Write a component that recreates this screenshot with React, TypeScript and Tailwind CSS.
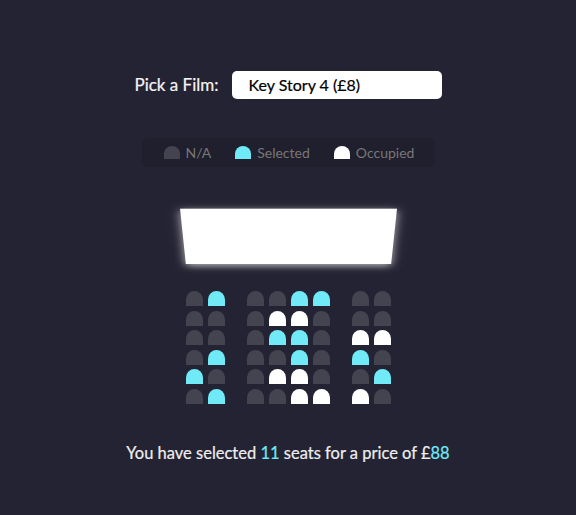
import { useState } from "react";

type SeatState = "n" | "s" | "o";

const seatRows: SeatState[][] = [
  ["n", "s", "n", "n", "s", "s", "n", "n"],
  ["n", "n", "n", "o", "o", "n", "n", "n"],
  ["n", "n", "n", "s", "s", "n", "o", "o"],
  ["n", "s", "n", "n", "s", "n", "s", "n"],
  ["s", "n", "n", "o", "o", "n", "n", "s"],
  ["n", "s", "n", "n", "o", "o", "o", "n"],
];

const seatColor: Record<SeatState, string> = {
  n: "bg-[#444451]",
  s: "bg-[#6feaf6]",
  o: "bg-white",
};

function Seat({ state, aisle }: { state: SeatState; aisle?: "left" | "right" }) {
  return (
    <div
      className={`h-[15px] w-[17px] rounded-t-[10px] ${seatColor[state]} ${
        aisle === "right" ? "mr-[17px]" : ""
      } ${aisle === "left" ? "ml-[17px]" : ""}`}
    />
  );
}

export default function App() {
  const [film] = useState("Key Story 4 (£8)");
  const selected = seatRows.flat().filter((s) => s === "s").length;

  return (
    <div className="flex min-h-screen h-[515px] w-full flex-col items-center bg-[#242333] font-['Lato',sans-serif] text-white">
      {/* film picker */}
      <div className="mt-[71px] flex items-center gap-[13px]">
        <label className="text-[17px] text-[#f4f4f4] [-webkit-text-stroke:0.2px_#f4f4f4]">Pick a Film:</label>
        <select
          value={film}
          onChange={() => {}}
          className="h-[28px] w-[210px] appearance-none rounded-[5px] border-0 bg-white pl-[17px] text-[16px] font-['Lato',sans-serif] text-black outline-none [-webkit-text-stroke:0.2px_#000]"
        >
          <option>Key Story 4 (£8)</option>
        </select>
      </div>

      {/* legend */}
      <ul className="mt-[39px] flex h-[29px] w-[293px] items-center gap-[24px] rounded-[5px] bg-black/10 pl-[22px] text-[14px] text-[#777]">
        <li className="flex items-center gap-[6px]">
          <div className="h-[13px] w-[16px] rounded-t-[10px] bg-[#444451]" />
          <span>N/A</span>
        </li>
        <li className="flex items-center gap-[6px]">
          <div className="h-[13px] w-[16px] rounded-t-[10px] bg-[#6feaf6]" />
          <span>Selected</span>
        </li>
        <li className="flex items-center gap-[6px]">
          <div className="h-[13px] w-[16px] rounded-t-[10px] bg-white" />
          <span>Occupied</span>
        </li>
      </ul>

      {/* screen */}
      <div className="mt-[31px] [perspective:1000px]">
        <div className="h-[78px] w-[211px] bg-white shadow-[0_3px_10px_rgba(255,255,255,0.7)] [transform:rotateX(-45deg)]" />
      </div>

      {/* seats */}
      <div className="mt-[15px] flex flex-col gap-y-[4.5px]">
        {seatRows.map((row, r) => (
          <div key={r} className="flex gap-x-[5px]">
            {row.map((s, c) => (
              <Seat
                key={c}
                state={s}
                aisle={c === 1 ? "right" : c === 6 ? "left" : undefined}
              />
            ))}
          </div>
        ))}
      </div>

      <p className="mt-[37px] text-[16.5px] text-[#eee] [-webkit-text-stroke:0.2px_#eee]">
        You have selected <span className="text-[#6feaf6] [-webkit-text-stroke:0.2px_#6feaf6]">{selected}</span> seats for a price of £
        <span className="text-[#6feaf6] [-webkit-text-stroke:0.2px_#6feaf6]">{selected * 8}</span>
      </p>
    </div>
  );
}
